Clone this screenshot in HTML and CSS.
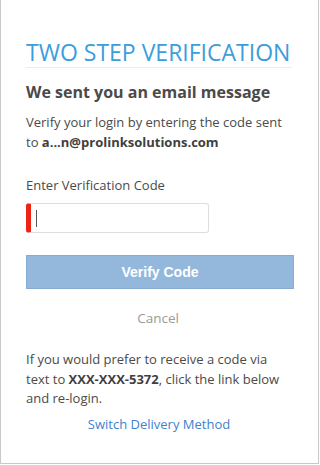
FILE: index.html
```html
<!DOCTYPE html>
<html>
<head>
<meta charset="utf-8">
<link rel="stylesheet" href="styles.css">
</head>
<body>
<div class="frame">
  <div class="content">
    <h1 class="title">TWO STEP VERIFICATION</h1>
    <h2 class="subtitle">We sent you an email message</h2>
    <p class="text">Verify your login by entering the code sent to <b>a...n@prolinksolutions.com</b></p>
    <label class="label">Enter Verification Code</label>
    <div class="input"><span class="caret"></span></div>
    <button class="btn">Verify Code</button>
    <div class="cancel">Cancel</div>
    <p class="text alt">If you would prefer to receive a code via text to <b>XXX-XXX-5372</b>, click the link below and re-login.</p>
    <div class="switch">Switch Delivery Method</div>
  </div>
</div>
</body>
</html>
```
FILE: styles.css
```css
html, body { margin: 0; padding: 0; background: #fff; }
body { width: 320px; height: 465px; overflow: hidden; font-family: "Open Sans", sans-serif; }
.frame {
  width: 317px;
  height: 463px;
  border: 1px solid #c8c8c8;
  border-top: none;
  box-sizing: content-box;
}
.content { padding: 38px 26px 0 25px; display: flex; flex-direction: column; }
.title {
  margin: 0;
  font-size: 23px;
  font-weight: 400;
  color: #3b9ddd;
  line-height: 28px;
  padding-bottom: 1px;
  border-bottom: 1px solid #ececec;
  white-space: nowrap;
}
.subtitle {
  margin: 13px 0 0;
  font-size: 16px;
  font-weight: 700;
  color: #4a4a4a;
  line-height: 22px;
}
.text {
  margin: 10px 0 0;
  font-size: 13px;
  line-height: 19.5px;
  color: #4a4a4a;
}
.text b { font-weight: 700; color: #3f3f3f; }
.label {
  margin-top: 23px;
  font-size: 13px;
  line-height: 20px;
  color: #4a4a4a;
}
.input {
  margin-top: 8px;
  width: 183px;
  height: 30px;
  box-sizing: border-box;
  border: 1px solid #ddd;
  border-left: 5px solid #ee2316;
  border-radius: 3px;
  display: flex;
  align-items: center;
  padding-left: 5px;
}
.caret { width: 1px; height: 17px; background: #555; }
.btn {
  margin-top: 22px;
  width: 268px;
  height: 34px;
  background: #93b8dc;
  border: 1px solid #87acd3;
  color: #fff;
  font-family: "Liberation Sans", Arial, sans-serif;
  font-weight: 700;
  font-size: 14px;
  padding: 0;
}
.cancel {
  margin-top: 19px;
  text-align: center;
  font-size: 13.5px;
  line-height: 20px;
  color: #999;
  padding-right: 2px;
}
.alt { margin-top: 22px; }
.switch {
  margin-top: 5px;
  text-align: center;
  font-size: 13px;
  line-height: 20px;
  color: #3f82cc;
}
```
